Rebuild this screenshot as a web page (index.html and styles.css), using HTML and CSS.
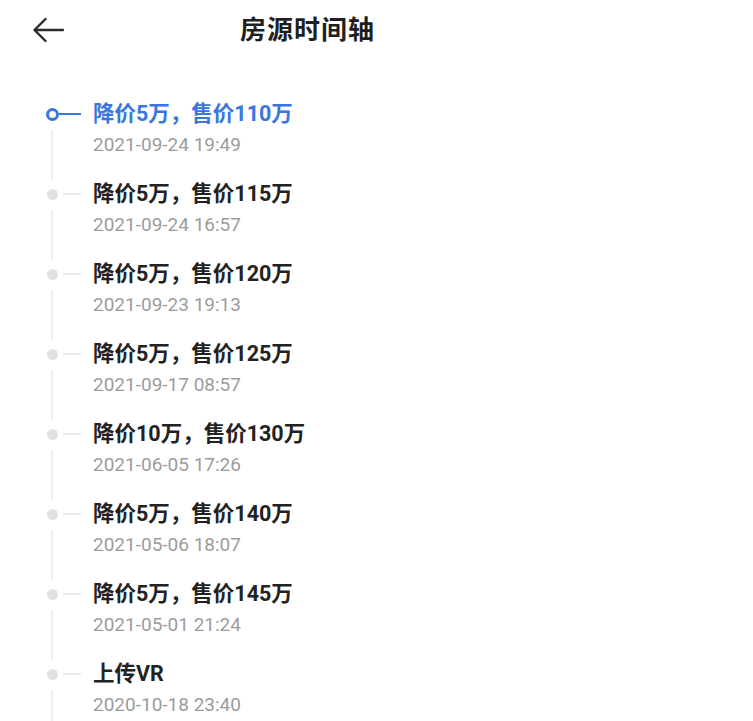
FILE: index.html
```html
<!DOCTYPE html>
<html lang="zh-CN">
<head>
<meta charset="utf-8">
<title>房源时间轴</title>
<link rel="stylesheet" href="styles.css">
</head>
<body>
<div class="page">
  <header class="header">
    <svg class="back" width="32" height="26" viewBox="0 0 32 26"><path d="M31 13H2.5M13.5 2L2.5 13L13.5 24" fill="none" stroke="#2b2b2b" stroke-width="2.4" stroke-linecap="round" stroke-linejoin="round"/></svg>
    <h1 class="title">房源时间轴</h1>
  </header>
  <ul class="timeline">
    <li class="item active">
      <div class="axis"><div class="marker"><span class="dot"></span><span class="dash"></span></div><span class="line"></span></div>
      <div class="body"><div class="event">降价5万，售价110万</div><div class="date">2021-09-24 19:49</div></div>
    </li>
    <li class="item">
      <div class="axis"><div class="marker"><span class="dot"></span><span class="dash"></span></div><span class="line"></span></div>
      <div class="body"><div class="event">降价5万，售价115万</div><div class="date">2021-09-24 16:57</div></div>
    </li>
    <li class="item">
      <div class="axis"><div class="marker"><span class="dot"></span><span class="dash"></span></div><span class="line"></span></div>
      <div class="body"><div class="event">降价5万，售价120万</div><div class="date">2021-09-23 19:13</div></div>
    </li>
    <li class="item">
      <div class="axis"><div class="marker"><span class="dot"></span><span class="dash"></span></div><span class="line"></span></div>
      <div class="body"><div class="event">降价5万，售价125万</div><div class="date">2021-09-17 08:57</div></div>
    </li>
    <li class="item">
      <div class="axis"><div class="marker"><span class="dot"></span><span class="dash"></span></div><span class="line"></span></div>
      <div class="body"><div class="event">降价10万，售价130万</div><div class="date">2021-06-05 17:26</div></div>
    </li>
    <li class="item">
      <div class="axis"><div class="marker"><span class="dot"></span><span class="dash"></span></div><span class="line"></span></div>
      <div class="body"><div class="event">降价5万，售价140万</div><div class="date">2021-05-06 18:07</div></div>
    </li>
    <li class="item">
      <div class="axis"><div class="marker"><span class="dot"></span><span class="dash"></span></div><span class="line"></span></div>
      <div class="body"><div class="event">降价5万，售价145万</div><div class="date">2021-05-01 21:24</div></div>
    </li>
    <li class="item">
      <div class="axis"><div class="marker"><span class="dot"></span><span class="dash"></span></div><span class="line"></span></div>
      <div class="body"><div class="event">上传VR</div><div class="date">2020-10-18 23:40</div></div>
    </li>
  </ul>
</div>
</body>
</html>
```

FILE: styles.css
```css
html, body {
  margin: 0;
  padding: 0;
  background: #ffffff;
  height: 100%;
  overflow: hidden;
}
body {
  font-family: Roboto, "Noto Sans CJK SC", sans-serif;
  color: #222222;
}
.page {
  display: flex;
  flex-direction: column;
}
.header {
  display: flex;
  align-items: center;
  height: 56px;
  padding-left: 32px;
  padding-top: 2px;
}
.back {
  display: block;
  flex: none;
}
.title {
  margin: 0 0 0 176px;
  font-size: 26px;
  font-weight: 700;
  line-height: 56px;
  letter-spacing: 1px;
  color: #1f1f1f;
}
.timeline {
  list-style: none;
  margin: 0;
  padding: 41px 0 0 46px;
  display: flex;
  flex-direction: column;
}
.item {
  display: flex;
  height: 80px;
}
.axis {
  width: 47px;
  flex: none;
  display: flex;
  flex-direction: column;
}
.marker {
  height: 30px;
  display: flex;
  align-items: center;
}
.dot {
  width: 11px;
  height: 11px;
  border-radius: 50%;
  background: #e2e2e2;
  margin-left: 1px;
  flex: none;
}
.dash {
  width: 18px;
  height: 2px;
  background: #e8e8e8;
  margin-left: 5px;
  flex: none;
}
.line {
  width: 2px;
  background: #efefef;
  margin-left: 5px;
  margin-top: 1px;
  margin-bottom: -1px;
  flex: 1;
}
.active .dot {
  width: 13px;
  height: 13px;
  box-sizing: border-box;
  border: 3px solid #3a76df;
  background: #ffffff;
  margin-left: 0;
}
.active .dash {
  width: 22px;
  height: 2px;
  margin-left: 0;
  background: #3a76df;
}
.body {
  display: flex;
  flex-direction: column;
}
.event {
  font-size: 21.5px;
  font-weight: 700;
  line-height: 30px;
  color: #222222;
}
.active .event {
  color: #3a76df;
}
.date {
  margin-top: 2px;
  font-size: 19px;
  line-height: 28px;
  color: #9c9c9c;
}
```
